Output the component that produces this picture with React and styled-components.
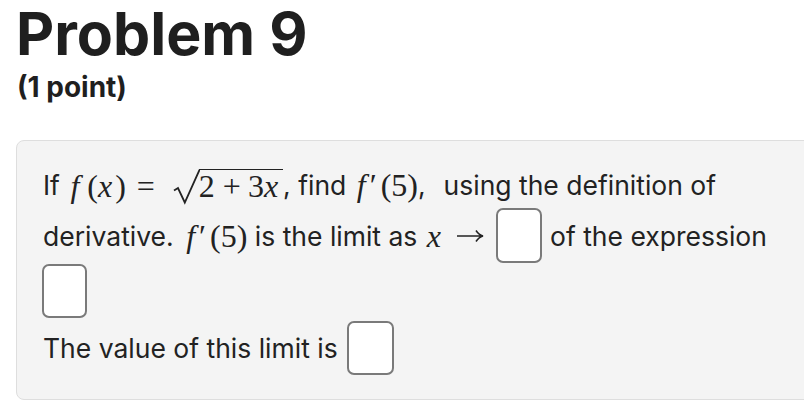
import React from "react";
import styled, { createGlobalStyle } from "styled-components";

const GlobalStyle = createGlobalStyle`
  html, body {
    margin: 0;
    padding: 0;
    background: #ffffff;
    overflow: hidden;
  }
  body {
    font-family: Inter, "Liberation Sans", sans-serif;
    color: #222222;
  }
`;

const Page = styled.div`
  width: 804px;
  height: 401px;
  overflow: hidden;
`;

const Title = styled.h1`
  margin: -2px 0 0 16px;
  font-size: 59px;
  line-height: normal;
  font-weight: 700;
  color: #1f1f1f;
`;

const Points = styled.div`
  margin: 2px 0 0 17px;
  font-size: 28px;
  line-height: 32px;
  font-weight: 700;
  color: #1f1f1f;
`;

const Panel = styled.div`
  margin: 37px 0 0 16px;
  width: 830px;
  box-sizing: border-box;
  padding: 21px 26px 24px;
  background: #f4f4f4;
  border: 1px solid #dedede;
  border-radius: 8px;
  font-size: 26.5px;
`;

const Line = styled.div`
  display: flex;
  align-items: center;
  height: ${(p) => p.$h}px;
  margin-top: ${(p) => p.$gap || 0}px;
  white-space: pre;
`;

const Words = styled.span`
  margin-left: ${(p) => p.$ml || 0}px;
`;

const Math = styled.span`
  font-family: "Liberation Serif", "DejaVu Serif", serif;
  font-size: 32px;
  line-height: 32px;
  display: inline-block;
  margin: 0 ${(p) => p.$mr || 0}px 0 ${(p) => p.$ml || 0}px;
`;

const Var = styled.i`
  font-style: italic;
  margin-right: ${(p) => p.$r || 0}px;
`;

const Prime = styled.span`
  margin-right: 4px;
`;

const Rel = styled.span`
  display: inline-block;
  margin: 0 ${(p) => p.$r}px 0 ${(p) => p.$l}px;
`;

const Radical = styled.span`
  position: relative;
  display: inline-block;
  padding-left: 26px;
`;

const RadSign = styled.svg`
  position: absolute;
  left: 0;
  top: 0;
  width: 27px;
  height: 36px;
`;

const Radicand = styled.span`
  display: inline-block;
  border-top: 1.6px solid #222;
`;

const Arrow = styled.svg`
  width: 28px;
  height: 14px;
  margin-left: 14px;
  flex: none;
`;

const AnswerBox = styled.span`
  display: inline-block;
  box-sizing: border-box;
  width: ${(p) => p.$w || 46}px;
  height: ${(p) => p.$h || 55}px;
  background: #ffffff;
  border: 2px solid #7a7a7a;
  border-radius: 7px;
  margin: 0 ${(p) => p.$mr || 0}px 0 ${(p) => p.$ml || 0}px;
  flex: none;
`;

const FPrime = ({ $ml, $mr }) => (
  <Math $ml={$ml} $mr={$mr}>
    <Var $r={4}>f</Var>
    <Prime>′</Prime>(5)
  </Math>
);

export default function App() {
  return (
    <Page>
      <GlobalStyle />
      <Title>Problem 9</Title>
      <Points>(1 point)</Points>
      <Panel>
        <Line $h={46}>
          {"If "}
          <Math $ml={3}>
            <Var $r={8}>f</Var>(<Var $r={3}>x</Var>)
            <Rel $l={11} $r={18}>
              =
            </Rel>
            <Radical>
              <RadSign viewBox="0 0 27 36">
                <path
                  d="M1 21.5 L5 19 L11.8 33.5 L26.5 0.8"
                  fill="none"
                  stroke="#222"
                  strokeWidth="1.8"
                />
              </RadSign>
              <Radicand>
                2
                <Rel $l={8} $r={7}>
                  +
                </Rel>
                3<Var $r={5}>x</Var>
              </Radicand>
            </Radical>
          </Math>
          {", find "}
          <FPrime $ml={3} />
          {","}
          <Words $ml={18}>using the definition of</Words>
        </Line>
        <Line $h={55}>
          {"derivative. "}
          <FPrime $ml={5} />
          {" is the limit as "}
          <Math $ml={2}>
            <Var $r={1}>x</Var>
          </Math>
          <Arrow viewBox="0 0 28 14">
            <path
              d="M1 7 H26 M20 1.5 Q23 6 27 7 Q23 8 20 12.5"
              fill="none"
              stroke="#222"
              strokeWidth="1.6"
            />
          </Arrow>
          <AnswerBox $ml={12} $mr={8} />
          {"of the expression"}
        </Line>
        <Line $h={54} $gap={1}>
          <AnswerBox $w={45} $h={54} $ml={-1} />
        </Line>
        <Line $h={54} $gap={3}>
          {"The value of this limit is"}
          <AnswerBox $w={47} $h={54} $ml={9} />
        </Line>
      </Panel>
    </Page>
  );
}
